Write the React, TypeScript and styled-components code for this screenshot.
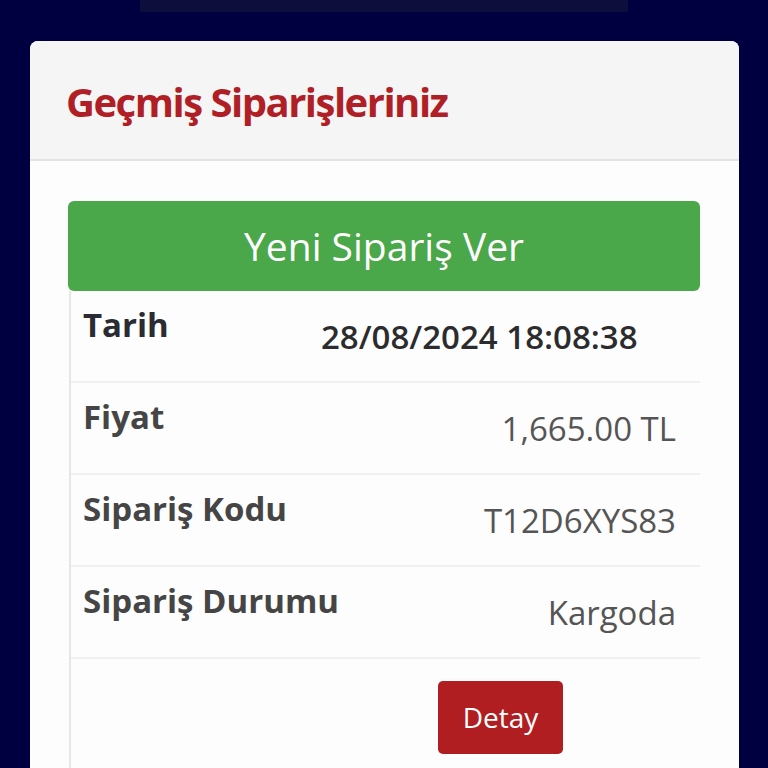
import styled, { createGlobalStyle } from 'styled-components';

const GlobalStyle = createGlobalStyle`
  html, body {
    margin: 0;
    padding: 0;
    background: #000040;
    font-family: "Open Sans", "Noto Sans", sans-serif;
  }
`;

interface IRow {
  label: string;
  value: string;
  strong?: boolean;
}

const rows: IRow[] = [
  { label: 'Tarih', value: '28/08/2024 18:08:38', strong: true },
  { label: 'Fiyat', value: '1,665.00 TL' },
  { label: 'Sipariş Kodu', value: 'T12D6XYS83' },
  { label: 'Sipariş Durumu', value: 'Kargoda' },
];

const App = () => {
  return (
    <Page>
      <GlobalStyle />
      <TopBar />
      <Card>
        <CardHeader>
          <Title>Geçmiş Siparişleriniz</Title>
        </CardHeader>
        <CardBody>
          <NewOrderButton>Yeni Sipariş Ver</NewOrderButton>
          <OrderTable>
            {rows.map((row) => (
              <Row key={row.label}>
                <Label $dark={row.strong}>{row.label}</Label>
                <Value $strong={row.strong}>{row.value}</Value>
              </Row>
            ))}
            <ActionRow>
              <DetailButton>Detay</DetailButton>
            </ActionRow>
          </OrderTable>
        </CardBody>
      </Card>
    </Page>
  );
};

const Page = styled.div`
  width: 768px;
  height: 768px;
  overflow: hidden;
  background: #000040;
  display: flex;
  flex-direction: column;
  align-items: center;
`;

const TopBar = styled.div`
  flex: none;
  width: 488px;
  height: 12px;
  background: #0e0e3c;
`;

const Card = styled.section`
  flex: none;
  margin-top: 29px;
  width: 709px;
  height: 800px;
  margin-left: 1px;
  background: #fdfdfd;
  border-radius: 8px;
  overflow: hidden;
`;

const CardHeader = styled.header`
  height: 118px;
  background: #f5f5f5;
  border-bottom: 2px solid #e3e3e3;
  display: flex;
  align-items: center;
  padding-left: 36px;
`;

const Title = styled.h2`
  margin: 0;
  color: #b01e26;
  font-size: 40px;
  font-weight: 700;
  letter-spacing: -1.5px;
  padding-top: 2px;
`;

const CardBody = styled.div`
  padding: 40px 39px 0 38px;
`;

const NewOrderButton = styled.button`
  display: block;
  width: 100%;
  height: 90px;
  border: none;
  border-radius: 6px;
  background: #4aa74a;
  color: #fff;
  font-family: "Open Sans", sans-serif;
  font-size: 39px;
  padding: 0 0 2px;
`;

const OrderTable = styled.div`
  margin-left: 1px;
  border-left: 2px solid #e6e6e6;
`;

const Row = styled.div`
  height: 90px;
  display: grid;
  grid-template-columns: 230px 1fr;
  border-bottom: 2px solid #f0f0f0;
`;

const Label = styled.div<{ $dark?: boolean }>`
  padding: 12px 0 0 12px;
  font-size: 33px;
  line-height: 44px;
  font-weight: 700;
  white-space: nowrap;
  color: ${(p) => (p.$dark ? '#2a2b33' : '#454545')};
`;

const Value = styled.div<{ $strong?: boolean }>`
  display: flex;
  align-items: center;
  justify-content: ${(p) => (p.$strong ? 'flex-start' : 'flex-end')};
  padding: ${(p) => (p.$strong ? '0 0 0 20px' : '0 24px 0 0')};
  font-size: 33px;
  font-weight: ${(p) => (p.$strong ? 600 : 400)};
  color: ${(p) => (p.$strong ? '#2c2c2e' : '#555')};
`;

const ActionRow = styled.div`
  display: flex;
  height: 200px;
  padding: 22px 0 0 367px;
`;

const DetailButton = styled.button`
  width: 125px;
  height: 73px;
  border: none;
  border-radius: 5px;
  background: #b01e22;
  color: #fff;
  font-family: "Open Sans", sans-serif;
  font-size: 28px;
  padding: 0 0 2px;
`;

export default App;
